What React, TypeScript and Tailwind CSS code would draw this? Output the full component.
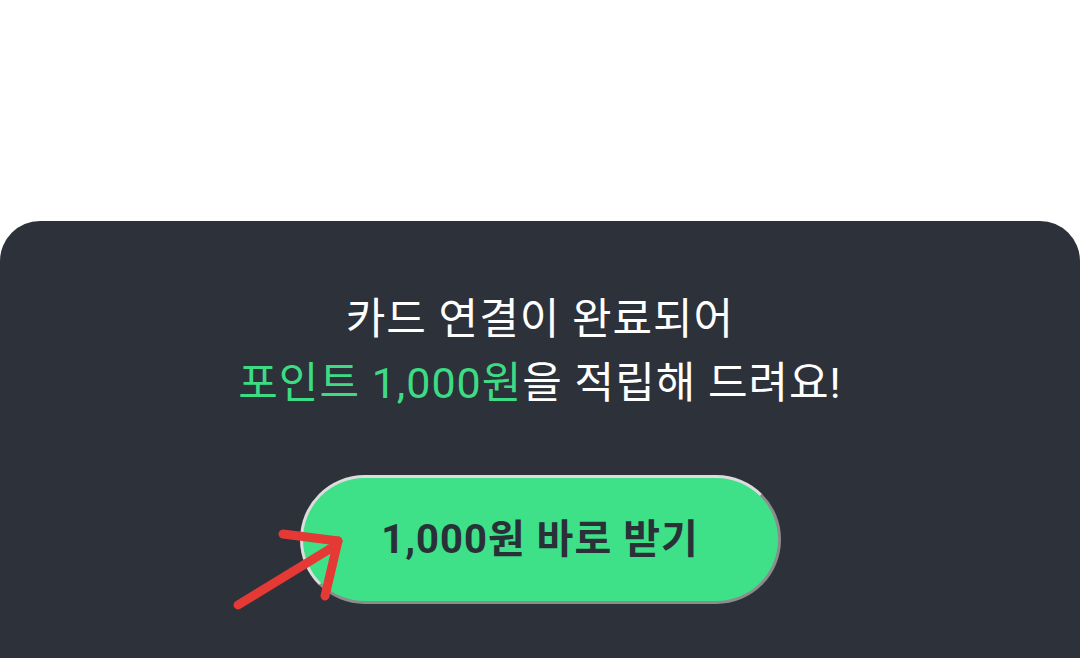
export default function App() {
  const font = { fontFamily: 'Roboto, "Noto Sans CJK KR", "Noto Sans", sans-serif' };
  return (
    <div className="w-[1080px] h-[658px] bg-white flex flex-col overflow-hidden" style={font}>
      <div className="h-[221px] shrink-0 bg-white" />
      <div className="relative flex-1 bg-[#2c313a] rounded-t-[40px] flex flex-col items-center pt-[66px]">
        <div className="text-[43px] leading-[64px] font-normal text-white text-center tracking-[1px]">
          <div>카드 연결이 완료되어</div>
          <div>
            <span className="text-[#3ddc84]">포인트 1,000원</span>을 적립해 드려요!
          </div>
        </div>
        <button className="mt-[60px] w-[481px] h-[129px] rounded-full bg-[#3ee088] border-[3px] border-t-[#dcdcdc] border-l-[#dcdcdc] border-r-[#8c8c8c] border-b-[#8c8c8c] flex items-center justify-center">
          <span className="text-[40px] font-bold text-[#2a3038] tracking-[1px]">1,000원 바로 받기</span>
        </button>
        <svg className="absolute left-[225px] top-[305px]" width="140" height="100" viewBox="0 0 140 100">
          <g stroke="#e53935" strokeWidth="9" strokeLinecap="round" strokeLinejoin="round" fill="none">
            <path d="M13 79 L108 21" />
            <path d="M58 8 L113 15" />
            <path d="M113 15 L100 70" />
          </g>
        </svg>
      </div>
    </div>
  );
}
